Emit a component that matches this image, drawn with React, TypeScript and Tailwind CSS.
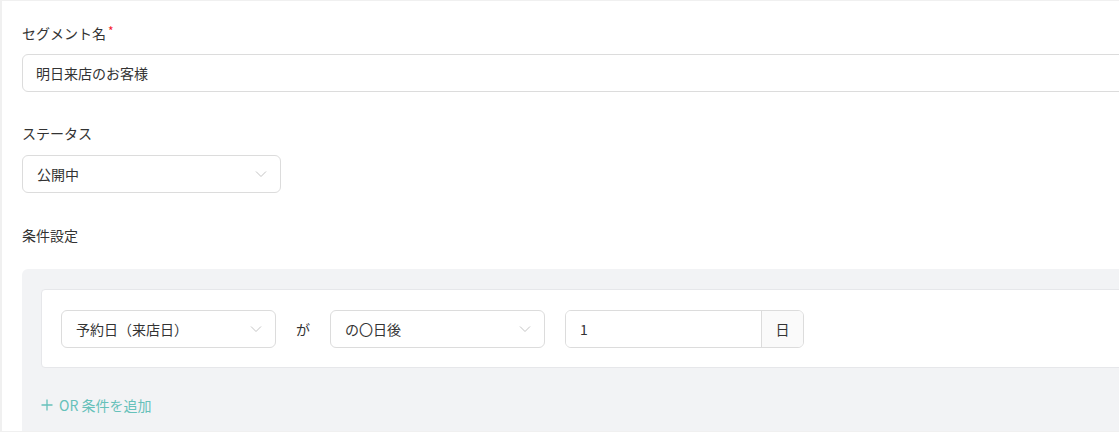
const FONT = "font-['Noto_Sans_CJK_JP','Noto_Sans',sans-serif]"

function Chevron() {
  return (
    <svg width="12" height="8" viewBox="0 0 12 8" fill="none" className="shrink-0">
      <path d="M1 1.5 6 6.5 11 1.5" stroke="#c4c4c4" strokeWidth="1" />
    </svg>
  )
}

function SelectBox({ value, width }: { value: string; width: string }) {
  return (
    <div
      className={`flex h-[38px] ${width} items-center justify-between rounded-md border border-[#dcdcdc] bg-white pl-[14px] pr-[13px]`}
    >
      <span className="text-sm text-[#333]">{value}</span>
      <Chevron />
    </div>
  )
}

export default function App() {
  return (
    <div className={`${FONT} h-[432px] w-[1119px] overflow-hidden border-l-2 border-t border-b border-[#f0f0f0] bg-white`}>
      <div className="w-[1200px] pl-[20px] pt-[21px]">
        <label className="flex h-[22px] items-center text-sm leading-[22px] text-[#333]">
          セグメント名<span className="ml-[2px] -mt-[4px] text-xs text-[#f5222d]">*</span>
        </label>
        <div className="mt-[10px] flex h-[38px] items-center rounded-md border border-[#dcdcdc] bg-white px-[13px]">
          <span className="text-sm text-[#333]">明日来店のお客様</span>
        </div>

        <label className="mt-[30px] flex h-[22px] items-center text-sm text-[#333]">ステータス</label>
        <div className="mt-[11px]">
          <SelectBox value="公開中" width="w-[259px]" />
        </div>

        <label className="mt-[31px] flex h-[22px] items-center text-sm text-[#333]">条件設定</label>

        <div className="mt-[23px] h-[200px] rounded-tl-md bg-[#f2f3f5] pl-[19px] pt-[20px]">
          <div className="flex h-[79px] items-center rounded-l-sm border border-[#e6e7ea] bg-white pl-[19px]">
            <SelectBox value="予約日（来店日）" width="w-[215px]" />
            <span className="w-[54px] text-center text-sm text-[#333]">が</span>
            <SelectBox value="の〇日後" width="w-[215px]" />
            <div className="ml-[20px] flex h-[38px] w-[239px] overflow-hidden rounded-md border border-[#dcdcdc]">
              <div className="flex flex-1 items-center bg-white px-[14px] text-sm text-[#333]">1</div>
              <div className="flex w-[42px] items-center justify-center border-l border-[#dcdcdc] bg-[#fafafa] text-sm text-[#333]">
                日
              </div>
            </div>
          </div>
          <button className="mt-[26px] flex h-[22px] items-center gap-[6px] text-sm text-[#66c1ba]">
            <svg width="12" height="12" viewBox="0 0 12 12" fill="none">
              <path d="M6 0.5v11M0.5 6h11" stroke="#66c1ba" strokeWidth="1.3" />
            </svg>
            OR 条件を追加
          </button>
        </div>
      </div>
    </div>
  )
}
